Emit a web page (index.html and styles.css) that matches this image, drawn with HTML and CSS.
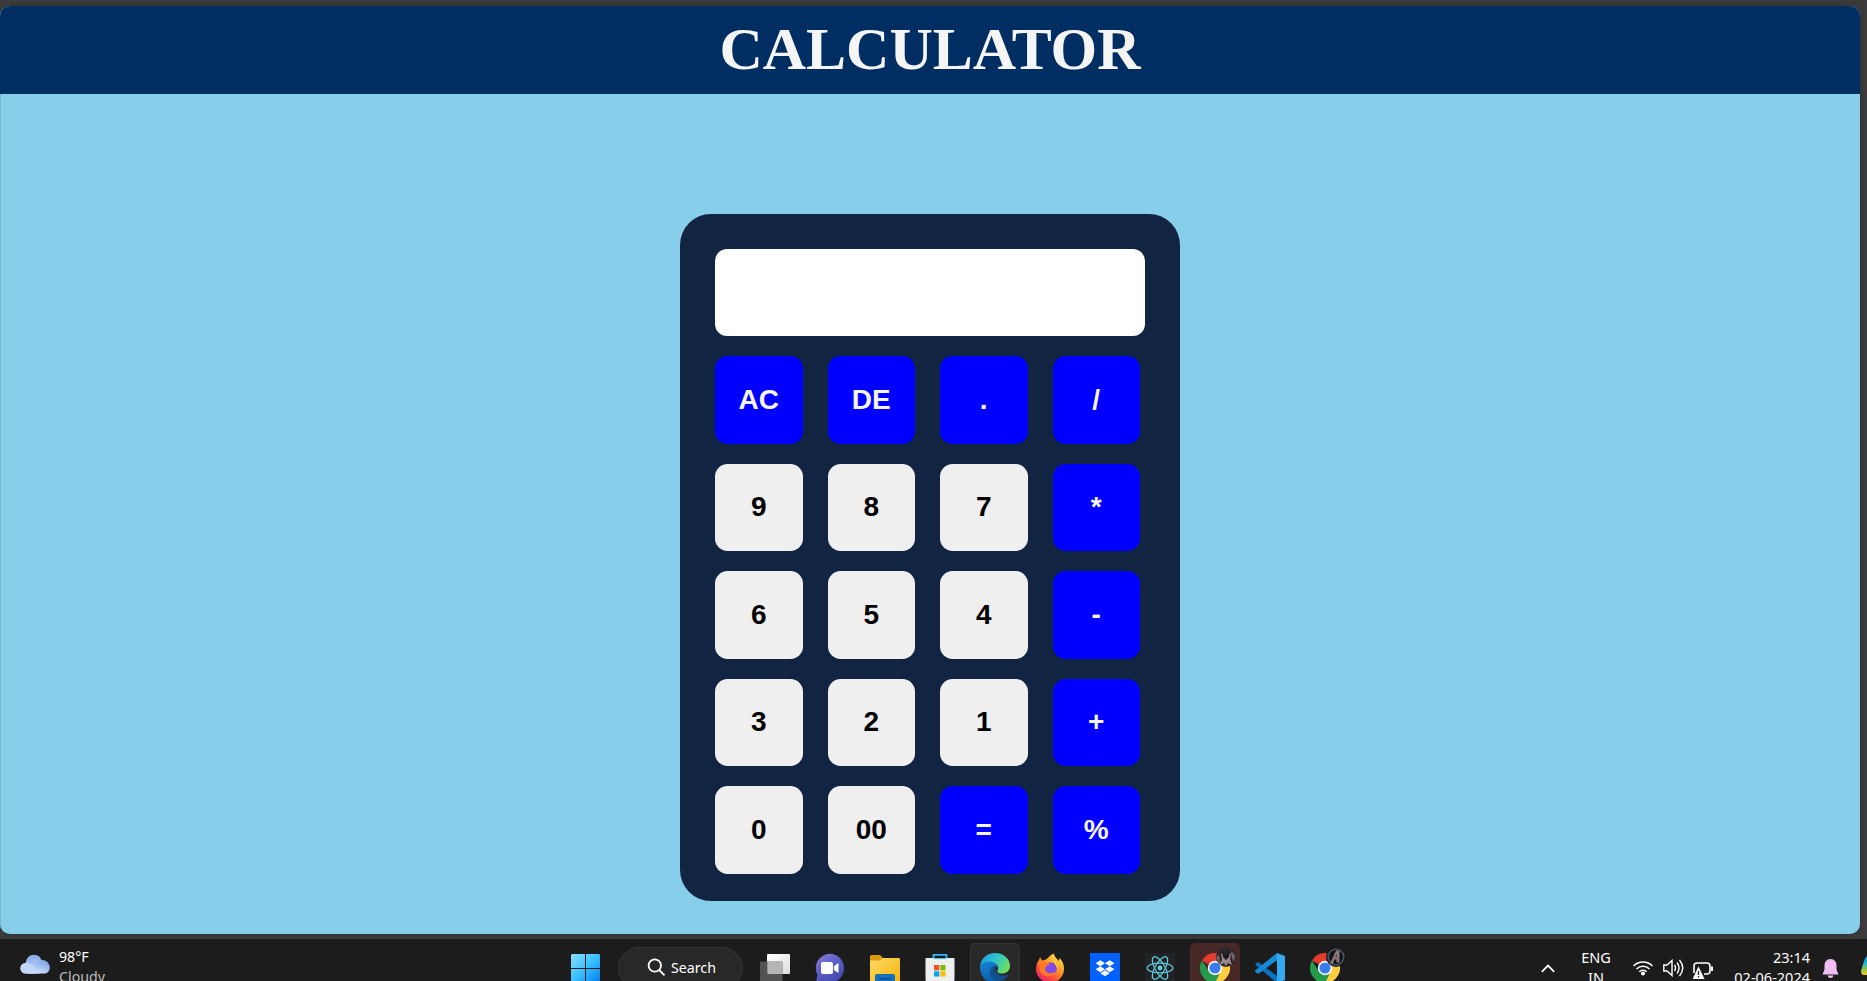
FILE: index.html
```html
<!DOCTYPE html>
<html lang="en">
<head>
<meta charset="utf-8">
<title>Calculator</title>
<link rel="stylesheet" href="styles.css">
</head>
<body>
<div class="window">
  <header class="header"><h1 class="title">CALCULATOR</h1></header>
  <main class="main">
    <div class="calculator">
      <div class="display"></div>
      <div class="keys">
        <button class="key op">AC</button><button class="key op">DE</button><button class="key op">.</button><button class="key op">/</button>
        <button class="key">9</button><button class="key">8</button><button class="key">7</button><button class="key op">*</button>
        <button class="key">6</button><button class="key">5</button><button class="key">4</button><button class="key op">-</button>
        <button class="key">3</button><button class="key">2</button><button class="key">1</button><button class="key op">+</button>
        <button class="key">0</button><button class="key">00</button><button class="key op">=</button><button class="key op">%</button>
      </div>
    </div>
  </main>
</div>
<footer class="taskbar">
  <div class="weather">
    <svg class="cloud" width="30" height="20" viewBox="0 0 30 20">
      <defs><linearGradient id="cl" x1="0" y1="0" x2="0" y2="1"><stop offset="0" stop-color="#86a9ea"/><stop offset="1" stop-color="#c9dcfa"/></linearGradient>
      <linearGradient id="cl2" x1="1" y1="0" x2="0.3" y2="1"><stop offset="0" stop-color="#6f97e4"/><stop offset="1" stop-color="#d8e6fd"/></linearGradient></defs>
      <path d="M5.500 19.500A5.200 5.200 0 0 1 5.600 9C6.400 4 9.500 0.800 14 0.800S21.500 4 22 8L20 19.500Z" fill="url(#cl)"/>
      <path d="M6 19.500C14 19.500 14 14 17 9.500C19 5.600 23 5 26 7C30.500 9.500 31 16 27.500 18.500C26.500 19.300 25.500 19.500 24 19.500Z" fill="url(#cl2)"/>
      <path d="M5.500 19.500A5.200 5.200 0 0 1 6 9C9.500 9 11.500 10.300 13 12.500C15.500 16 16 19.500 16 19.500Z" fill="#c3d7f9"/>
    </svg>
    <div class="label"><div>98°F</div><div class="dim">Cloudy</div></div>
  </div>
  <div class="start">
    <svg width="29" height="29" viewBox="0 0 29 29"><defs><linearGradient id="wn" x1="0" y1="0" x2="1" y2="1"><stop offset="0" stop-color="#8be0ff"/><stop offset="0.500" stop-color="#38c0ff"/><stop offset="1" stop-color="#007cf0"/></linearGradient></defs><path fill="url(#wn)" d="M1 0H14V14H0V1ZM15 0H28L29 1V14H15ZM0 15H14V29H1L0 28ZM15 15H29V28L28 29H15Z"/></svg>
  </div>
  <div class="search">
    <svg width="19" height="19" viewBox="0 0 19 19" fill="none" stroke="#fff" stroke-width="1.800"><circle cx="7.800" cy="7.500" r="6.200"/><path d="M12.200 12L17.500 17.300"/></svg>
    <span>Search</span>
  </div>
  <div class="apps">
    <div class="app"><svg width="30" height="30" viewBox="0 0 30 30"><defs><linearGradient id="tv" x1="0" y1="0" x2="1" y2="1"><stop offset="0" stop-color="#fff"/><stop offset="1" stop-color="#ddd"/></linearGradient></defs><rect x="7" y="1" width="23" height="20" rx="1" fill="url(#tv)"/><rect x="0" y="8.500" width="22.500" height="20" rx="1" fill="#5b5b5b" opacity=".88"/><path d="M7.500 8.500H22.500V21H7.500Z" fill="#b5b5b5"/></svg></div>
    <div class="app"><svg width="30" height="30" viewBox="0 0 30 30"><defs><linearGradient id="tm" x1="0" y1="0" x2="0.600" y2="1"><stop offset="0" stop-color="#8f7fd4"/><stop offset="0.500" stop-color="#5b5fc7"/><stop offset="1" stop-color="#464bb0"/></linearGradient></defs><path d="M15 .8A14.300 14.300 0 1 1 8 27.700L1 29L2.500 22A14.300 14.300 0 0 1 15 .8Z" fill="url(#tm)"/><rect x="6" y="9" width="12" height="12" rx="2" fill="#fff"/><path d="M19 13L23.500 10V20L19 17Z" fill="#fff"/></svg></div>
    <div class="app"><svg width="30" height="30" viewBox="0 0 30 30"><defs><linearGradient id="fd" x1="0" y1="0" x2="1" y2="1"><stop offset="0" stop-color="#ffdb68"/><stop offset="1" stop-color="#f5b50b"/></linearGradient></defs><path d="M0 3.500Q0 2 1.500 2H10L13 5H20V12H0Z" fill="#d79b0c"/><path d="M0 7.500H10L13 5H29L30 6V28H0Z" fill="url(#fd)"/><path d="M5 30V23Q5 21 7 21H23Q25 21 25 23V30Z" fill="#1470bd"/><rect x="9" y="25" width="12" height="1.500" fill="#0b4c8c"/></svg></div>
    <div class="app"><svg width="30" height="30" viewBox="0 0 30 30"><path d="M8.500 6V1.800H21.500V6" fill="none" stroke="#2fb8f5" stroke-width="1.800"/><path d="M.5 5H29.500V26Q29.500 29 26.500 29H3.500Q.5 29 .5 26Z" fill="#eee"/><path d="M8.500 5H21.500V6.200H8.500Z" fill="#4cc0f3"/><path d="M9 12H14.300V17.300H9Z" fill="#f25022"/><path d="M15.300 12H20.500V17.300H15.300Z" fill="#7fba00"/><path d="M9 18.300H14.300V23.500H9Z" fill="#00a4ef"/><path d="M15.300 18.300H20.500V23.500H15.300Z" fill="#ffb900"/></svg></div>
    <div class="app active"><svg width="30" height="30" viewBox="0 0 30 30"><defs><linearGradient id="eg" x1="0" y1="0.200" x2="1" y2="0.600"><stop offset="0" stop-color="#219bdc"/><stop offset="0.500" stop-color="#30c6cb"/><stop offset="1" stop-color="#6fe05a"/></linearGradient><linearGradient id="eb" x1="0" y1="0" x2="0.500" y2="1"><stop offset="0" stop-color="#1687dc"/><stop offset="1" stop-color="#0c59a4"/></linearGradient></defs><path d="M0 14C1 5 7 0 15 0C24 0 30 6 30 13C30 18 26 20.500 22 20.500C18.500 20.500 16.500 19 17.500 17.500C19.500 15 18 9.500 10 9.500C5 9.500 1 11.500 0 14Z" fill="url(#eg)"/><path d="M0 14C1.500 9.500 6 8 10 8.500C15 9 17.500 12 18 14.500C15 11.500 10.500 14 10.500 19C10.500 24 15 28 20 27.500C18 29.500 16 30 14 30C5 29.500 0 22 0 14Z" fill="url(#eb)"/><path d="M10.500 19C10.500 15 13 12.500 16 13.500C13.500 17 17 22.500 23 22.500C26 22.500 28 21 28.500 21.500C27 25 23 28 19 27.800C14 27.500 10.500 23 10.500 19Z" fill="#134f8c"/></svg></div>
    <div class="app"><svg width="30" height="30" viewBox="0 0 30 30"><defs><linearGradient id="ff" x1="0.900" y1="0" x2="0.200" y2="1"><stop offset="0" stop-color="#fff24a"/><stop offset="0.400" stop-color="#ff9f28"/><stop offset="0.700" stop-color="#ff5038"/><stop offset="1" stop-color="#e3157a"/></linearGradient></defs><path d="M5 4L7 7.500L10 7L13 5C14.500 2.500 17 1.500 19 .5C19 3 22 6 24 8L24.500 5C27 7.500 29 11 29 15.500A14 14 0 0 1 1 16C1 12 2.500 9 4 7Z" fill="url(#ff)"/><circle cx="15.500" cy="15.500" r="6.300" fill="#8149e8"/><path d="M3 9L12 9.500L15 11C12 12 10 14 10 16C10 20 16 22 20 18.500C18 25 8 25 5 18Z" fill="#ff7a22"/><path d="M17 5C20 6 23 10 22 15L20 11Z" fill="#ffc938"/></svg></div>
    <div class="app"><svg width="30" height="30" viewBox="0 0 30 30"><rect width="30" height="30" fill="#0061ff"/><path fill="#fff" d="M10.300 7.200L15 10.200L10.300 13.200L5.600 10.200ZM19.700 7.200L24.400 10.200L19.700 13.200L15 10.200ZM10.300 13.200L15 16.200L10.300 19.200L5.600 16.200ZM19.700 13.200L24.400 16.200L19.700 19.200L15 16.200ZM15 17.200L19.700 20.200L15 23.200L10.300 20.200Z"/></svg></div>
    <div class="app"><svg width="30" height="30" viewBox="0 0 30 30"><rect width="30" height="30" rx="1" fill="#222324"/><g fill="none" stroke="#61cbe2" stroke-width="1.200"><ellipse cx="15" cy="15" rx="12.800" ry="4.900"/><ellipse cx="15" cy="15" rx="12.800" ry="4.900" transform="rotate(60 15 15)"/><ellipse cx="15" cy="15" rx="12.800" ry="4.900" transform="rotate(120 15 15)"/></g><circle cx="15" cy="15" r="2.400" fill="#61cbe2"/></svg></div>
    <div class="app alert"><svg width="30" height="30" viewBox="0 0 30 30"><g id="chrome"><path d="M15 15L2 7.500A15 15 0 0 1 28 7.500L15 8Z" fill="#e33b2e"/><path d="M15 15L28 7.500A15 15 0 0 1 15 30Z" fill="#ffcd40"/><path d="M2 7.500L8.900 18.500L15 22L19.500 21L15 30A15 15 0 0 1 2 7.500Z" fill="#249a4b"/><circle cx="15" cy="15" r="7.200" fill="#fff"/><circle cx="15" cy="15" r="5.600" fill="#3a7cec"/></g></svg>
      <svg class="avatar" width="20" height="20" viewBox="0 0 20 20"><circle cx="10" cy="10" r="10" fill="#2b292c"/><path d="M0 10L3 8L4 15L6 17L3 17Z" fill="#6f6268"/><path d="M5 6L8 8L10 13L12 8L15 6L14 12L16 18L12 16L10 19L8 16L4 18L6 12Z" fill="#9c858d"/><path d="M15 4L19 8L18 15L16 11Z" fill="#75656c"/><path d="M6 2L9 8L11 8L14 2L13 10L10 13L7 10Z" fill="#1b1a1d"/></svg></div>
    <div class="app"><svg width="30" height="30" viewBox="0 0 30 30"><path d="M0 11.500L3 9L23 23.500V30H22L0 11.500Z" fill="#0b72bd"/><path d="M0 18.500L3 21L23 6.500V0H22L0 17.500Z" fill="#168bd8"/><path d="M22 0L30 3V27L22 30Z" fill="#35a9f0"/></svg></div>
    <div class="app"><svg width="30" height="30" viewBox="0 0 30 30"><use href="#chrome"/></svg>
      <svg class="avatar" width="20" height="20" viewBox="0 0 20 20"><circle cx="10" cy="10" r="10" fill="#101316"/><circle cx="10" cy="10" r="7.800" fill="none" stroke="#46535a" stroke-width="1.800"/><path d="M4 16.500L10 3.500H13.500V15.500H10.500V12.500H8.500L7 16.500ZM9.300 10.200H10.500V7Z" fill="#8d7479" fill-rule="evenodd"/></svg></div>
  </div>
  <div class="tray">
    <svg class="chev" width="14" height="9" viewBox="0 0 14 9" fill="none" stroke="#fff" stroke-width="1.800"><path d="M.8 7.800L7 1.600L13.200 7.800"/></svg>
    <div class="label lang"><div>ENG</div><div>IN</div></div>
    <svg class="wifi" width="20" height="16" viewBox="0 0 20 16" fill="none" stroke="#fff" stroke-width="1.600"><path d="M.6 6A13.200 13.200 0 0 1 19.400 6M3.500 9A9.200 9.200 0 0 1 16.500 9M6.300 11.800A5.200 5.200 0 0 1 13.700 11.800"/><circle cx="10" cy="13.500" r="1.300" fill="#fff"/></svg>
    <svg class="sound" width="21" height="18" viewBox="0 0 21 18" fill="none" stroke="#fff" stroke-width="1.400"><path d="M.8 6H4L9 1.500V16.500L4 12H.8Z"/><path d="M11.500 6Q13.500 9 11.500 12M14 3.500Q18 9 14 14.500M16.500 1Q23 9 16.500 17"/></svg>
    <svg class="battery" width="21" height="18" viewBox="0 0 21 18"><path d="M1 12V5Q1 2 4 2H14Q17 2 17 5V10Q17 13 14 13H11" fill="none" stroke="#fff" stroke-width="1.600"/><path d="M18 5.500H20V10H18Z" fill="#fff"/><path d="M5.500 5.500L11.500 18H-.5Z" fill="#fff"/><path d="M5.500 10V14M5.500 15V16.500" stroke="#222" stroke-width="1.300"/></svg>
    <div class="label clock"><div>23:14</div><div>02-06-2024</div></div>
    <svg class="bell" width="17" height="19" viewBox="0 0 17 19"><path d="M8.500 0C12.500 0 14.500 3 14.500 6.500V10.500L16.500 15.500H.5L2.500 10.500V6.500C2.500 3 4.500 0 8.500 0ZM5.500 16.500H11.500Q10.800 19 8.500 19T5.500 16.500Z" fill="#efbdf2"/></svg>
    <svg class="copilot" width="6" height="19" viewBox="0 0 6 19"><defs><linearGradient id="cp" x1="0" y1="0" x2="0" y2="1"><stop offset="0" stop-color="#1686e8"/><stop offset="0.400" stop-color="#22b8cf"/><stop offset="0.700" stop-color="#8bc34a"/><stop offset="1" stop-color="#f5cf20"/></linearGradient></defs><path d="M6 0Q4 1 3 5L0 15Q0 19 3 19H6Z" fill="url(#cp)"/></svg>
  </div>
</footer>
</body>
</html>
```
FILE: styles.css
```css
* { box-sizing: border-box; }
html, body { height: 100%; }
body {
  margin: 0;
  padding-top: 6px;
  background: #3b3b3b;
  display: flex;
  flex-direction: column;
  overflow: hidden;
}
.window {
  width: 1860px;
  height: 928px;
  flex: none;
  border-radius: 10px;
  overflow: hidden;
  background: #87ceeb;
  box-shadow: inset 1px 0 #78b6cf, 0 0 4px #2d2d2d;
}
.header {
  height: 88px;
  background: #002e63;
  text-align: center;
}
.title {
  margin: 0;
  padding-top: 9px;
  font: bold 60px/69px "Liberation Serif", serif;
  color: #f5f5f5;
}
.main { display: flex; justify-content: center; padding-top: 120px; }
.calculator {
  width: 500px;
  height: 687px;
  padding: 35px;
  border-radius: 31px;
  background: #112543;
}
.display {
  height: 87px;
  margin-bottom: 20px;
  border-radius: 12px;
  background: #fff;
}
.keys {
  display: grid;
  grid-template-columns: repeat(4, 87.5px);
  grid-auto-rows: 87.5px;
  gap: 20px 25px;
}
.key {
  border: 0;
  padding: 0;
  border-radius: 12.5px;
  background: #efefef;
  color: #000;
  font: bold 28px "Liberation Sans", Arial, sans-serif;
}
.op { background: #00f; color: #f5f5f5; }

.taskbar {
  flex: none;
  height: 58px;
  margin-top: 5px;
  background: #1c1c1c;
  display: flex;
  align-items: center;
  color: #fff;
  font: 14.5px/20px "Noto Sans", sans-serif;
}
.taskbar svg { display: block; flex: none; }
.label { font-size: 14.5px; line-height: 20px; white-space: nowrap; margin-top: -2px; }
.dim { color: #bdbdbd; }
.weather { width: 560px; padding-left: 20px; display: flex; gap: 9px; align-items: center; }
.weather .label { font-size: 14.2px; }
.cloud { margin-top: -8px; }
.start { width: 51px; display: flex; justify-content: center; }
.search {
  width: 125px;
  height: 42px;
  margin: 0 7px;
  padding-left: 28px;
  display: flex;
  align-items: center;
  gap: 5px;
  border: 1px solid #333;
  border-radius: 21px;
  background: #282828;
}
.search svg { margin-top: -2px; }
.search span { font-size: 14.2px; }
.apps { display: flex; gap: 5px; }
.app {
  position: relative;
  width: 50px;
  height: 50px;
  display: flex;
  align-items: center;
  justify-content: center;
  border-radius: 5px;
}
.active { background: #292929; box-shadow: inset 0 0 0 1px #333; }
.alert { background: #472827; }
.avatar { position: absolute; top: 4px; right: 4px; }
.tray { flex: 1; display: flex; align-items: center; }
.chev { margin-left: 191px; }
.lang { width: 28px; margin-left: 27px; display: flex; flex-direction: column; align-items: center; }
.wifi { margin-left: 23px; }
.sound { margin-left: 10px; }
.battery { margin-left: 9px; margin-top: 3px; }
.clock { width: 96px; text-align: right; }
.bell { margin-left: 12px; }
.copilot { margin-left: auto; margin-top: -6px; }
```
